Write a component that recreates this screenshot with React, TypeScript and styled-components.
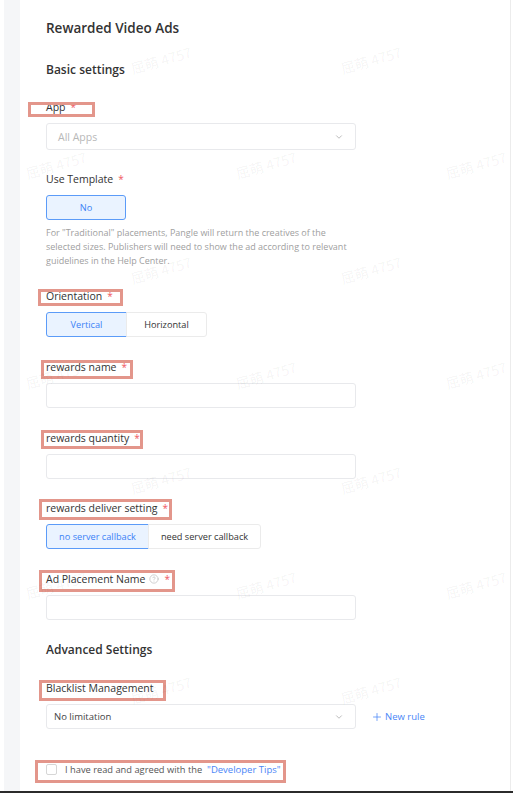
import React from "react";
import styled, { createGlobalStyle } from "styled-components";
import { ChevronDown, CircleHelp, Plus } from "lucide-react";

const GlobalStyle = createGlobalStyle`
  html, body {
    margin: 0;
    padding: 0;
    background: #ffffff;
  }
  body {
    font-family: "Open Sans", "Noto Sans", "Noto Sans CJK SC", sans-serif;
    color: #333;
  }
`;

const StyledPage = styled.div`
  position: relative;
  width: 513px;
  height: 793px;
  overflow: hidden;
  display: flex;
  flex-direction: column;
`;

const StyledBody = styled.div`
  flex: 1;
  display: flex;
`;

const StyledSidebar = styled.div`
  width: 16px;
  margin-left: 4px;
  background: #f5f6f8;
`;

const StyledPanel = styled.div`
  flex: 1;
  padding: 18px 0 0 26px;
  border-right: 1px solid #ececec;
  margin-right: 2px;
`;

const StyledBottomBar = styled.div`
  height: 2px;
  background: #2b2b2b;
`;

const StyledTitle = styled.h1`
  margin: 0;
  font-size: 13.5px;
  line-height: 20px;
  font-weight: 600;
  color: #333;
`;

const StyledSection = styled.h2<{ $gap: number }>`
  margin: ${(p) => p.$gap}px 0 0;
  font-size: 12px;
  line-height: 18px;
  font-weight: 600;
  color: #333;
`;

const StyledField = styled.div<{ $gap: number }>`
  margin-top: ${(p) => p.$gap}px;
`;

const StyledLabel = styled.div`
  position: relative;
  display: flex;
  align-items: center;
  gap: 4px;
  height: 16px;
  font-size: 10.5px;
  color: #333;
`;

const StyledStar = styled.span`
  color: #f0575f;
  font-size: 10px;
  margin-left: 1px;
`;

const StyledMark = styled.span<{ $x: number; $y: number; $w: number; $h: number }>`
  position: absolute;
  left: ${(p) => p.$x}px;
  top: ${(p) => p.$y}px;
  width: ${(p) => p.$w}px;
  height: ${(p) => p.$h}px;
  box-sizing: border-box;
  border: 3px solid #e3968b;
  pointer-events: none;
`;

const StyledControl = styled.div`
  margin-top: 8px;
  display: flex;
  align-items: center;
  gap: 15px;
`;

const StyledInput = styled.div<{ $h?: number; $pad?: number }>`
  box-sizing: border-box;
  width: 310px;
  height: ${(p) => p.$h ?? 25}px;
  border: 1px solid #e8e9ec;
  border-radius: 3px;
  background: #fff;
  display: flex;
  align-items: center;
  justify-content: space-between;
  padding: 0 11px 0 ${(p) => p.$pad ?? 11}px;
`;

const StyledPlaceholder = styled.span<{ $muted?: boolean }>`
  color: ${(p) => (p.$muted ? "#b8b8b8" : "#444")};
  font-size: ${(p) => (p.$muted ? "10.5px" : "9.5px")};
`;

const StyledSegments = styled.div`
  display: flex;
`;

const StyledSegment = styled.div<{ $active?: boolean; $w: number }>`
  box-sizing: border-box;
  width: ${(p) => p.$w}px;
  height: 25px;
  display: flex;
  align-items: center;
  justify-content: center;
  font-size: 9.2px;
  border: 1px solid ${(p) => (p.$active ? "#5b9bf8" : "#ebebeb")};
  background: ${(p) => (p.$active ? "#eaf3ff" : "#fff")};
  color: ${(p) => (p.$active ? "#3b82f6" : "#333")};
  border-radius: 3px;
  & + & {
    margin-left: -1px;
  }
  &:first-child:not(:last-child) {
    border-top-right-radius: 0;
    border-bottom-right-radius: 0;
  }
  &:last-child:not(:first-child) {
    border-top-left-radius: 0;
    border-bottom-left-radius: 0;
  }
`;

const StyledHelp = styled.p`
  margin: 6px 0 0;
  width: 312px;
  font-size: 9px;
  line-height: 14px;
  color: #a0a0a0;
`;

const StyledLink = styled.span`
  display: inline-flex;
  align-items: center;
  gap: 2px;
  color: #4a86f7;
  font-size: 9.5px;
`;

const StyledAgree = styled.label`
  position: relative;
  margin-top: 32px;
  display: flex;
  align-items: center;
  gap: 8px;
  height: 16px;
  font-size: 9.3px;
  color: #555;
`;

const StyledCheckbox = styled.span`
  box-sizing: border-box;
  width: 11px;
  height: 11px;
  border: 1px solid #d6d6d6;
  border-radius: 2px;
  background: #fff;
`;

const StyledWatermarks = styled.div`
  position: absolute;
  inset: 0;
  pointer-events: none;
  display: flex;
  flex-direction: column;
  padding-top: 7px;
`;

const StyledWatermarkRow = styled.div<{ $odd: boolean }>`
  flex: 0 0 105px;
  display: flex;
  align-items: center;
  gap: 148px;
  padding-left: ${(p) => (p.$odd ? 25 : 130)}px;
`;

const StyledWatermark = styled.span`
  transform: rotate(-16deg);
  font-size: 14px;
  color: rgba(0, 0, 0, 0.055);
  font-family: "Noto Sans CJK SC", "Open Sans", sans-serif;
  white-space: nowrap;
`;

type Mark = { x: number; y: number; w: number; h: number };

function Label(props: { text: string; mark?: Mark; help?: boolean }) {
  const { text, mark, help } = props;
  return (
    <StyledLabel>
      <span>{text}</span>
      {help && <CircleHelp size={10} color="#b5b5b5" strokeWidth={1.5} />}
      <StyledStar>*</StyledStar>
      {mark && <StyledMark $x={mark.x} $y={mark.y} $w={mark.w} $h={mark.h} />}
    </StyledLabel>
  );
}

function App() {
  const rows = [0, 1, 2, 3, 4, 5, 6];

  return (
    <StyledPage>
      <GlobalStyle />
      <StyledBody>
        <StyledSidebar />
        <StyledPanel>
          <StyledTitle>Rewarded Video Ads</StyledTitle>
          <StyledSection $gap={23}>Basic settings</StyledSection>

          <StyledField $gap={20}>
            <Label text="App" mark={{ x: -18, y: 3, w: 67, h: 15 }} />
            <StyledControl>
              <StyledInput $h={27}>
                <StyledPlaceholder $muted>All Apps</StyledPlaceholder>
                <ChevronDown size={10} color="#b0b0b0" />
              </StyledInput>
            </StyledControl>
          </StyledField>

          <StyledField $gap={21}>
            <Label text="Use Template" />
            <StyledControl>
              <StyledSegments>
                <StyledSegment $active $w={80}>
                  No
                </StyledSegment>
              </StyledSegments>
            </StyledControl>
            <StyledHelp>
              For "Traditional" placements, Pangle will return the creatives of
              the selected sizes. Publishers will need to show the ad according
              to relevant guidelines in the Help Center.
            </StyledHelp>
          </StyledField>

          <StyledField $gap={20}>
            <Label text="Orientation" mark={{ x: -8, y: 1, w: 85, h: 17 }} />
            <StyledControl>
              <StyledSegments>
                <StyledSegment $active $w={81}>
                  Vertical
                </StyledSegment>
                <StyledSegment $w={81}>Horizontal</StyledSegment>
              </StyledSegments>
            </StyledControl>
          </StyledField>

          <StyledField $gap={22}>
            <Label text="rewards name" mark={{ x: -5, y: 1, w: 92, h: 19 }} />
            <StyledControl>
              <StyledInput />
            </StyledControl>
          </StyledField>

          <StyledField $gap={22}>
            <Label
              text="rewards quantity"
              mark={{ x: -5, y: 0, w: 102, h: 19 }}
            />
            <StyledControl>
              <StyledInput />
            </StyledControl>
          </StyledField>

          <StyledField $gap={21}>
            <Label
              text="rewards deliver setting"
              mark={{ x: -7, y: -1, w: 133, h: 21 }}
            />
            <StyledControl>
              <StyledSegments>
                <StyledSegment $active $w={103}>
                  no server callback
                </StyledSegment>
                <StyledSegment $w={113}>need server callback</StyledSegment>
              </StyledSegments>
            </StyledControl>
          </StyledField>

          <StyledField $gap={22}>
            <Label
              text="Ad Placement Name"
              help
              mark={{ x: -7, y: -1, w: 136, h: 22 }}
            />
            <StyledControl>
              <StyledInput />
            </StyledControl>
          </StyledField>

          <StyledSection $gap={21}>Advanced Settings</StyledSection>

          <StyledField $gap={21}>
            <StyledLabel>
              <span>Blacklist Management</span>
              <StyledMark $x={-7} $y={0} $w={127} $h={21} />
            </StyledLabel>
            <StyledControl>
              <StyledInput $pad={7}>
                <StyledPlaceholder>No limitation</StyledPlaceholder>
                <ChevronDown size={10} color="#b0b0b0" />
              </StyledInput>
              <StyledLink>
                <Plus size={12} strokeWidth={1.5} />
                New rule
              </StyledLink>
            </StyledControl>
          </StyledField>

          <StyledAgree>
            <StyledCheckbox />
            <span>
              I have read and agreed with the{" "}
              <StyledLink>&nbsp;"Developer Tips"</StyledLink>
            </span>
            <StyledMark $x={-11} $y={-1} $w={251} $h={23} />
          </StyledAgree>
        </StyledPanel>
      </StyledBody>
      <StyledBottomBar />

      <StyledWatermarks>
        {rows.map((r) => (
          <StyledWatermarkRow key={r} $odd={r % 2 === 1}>
            {(r % 2 === 1 ? [0, 1, 2] : [0, 1]).map((c) => (
              <StyledWatermark key={c}>屈萌 4757</StyledWatermark>
            ))}
          </StyledWatermarkRow>
        ))}
      </StyledWatermarks>
    </StyledPage>
  );
}

export default App;
